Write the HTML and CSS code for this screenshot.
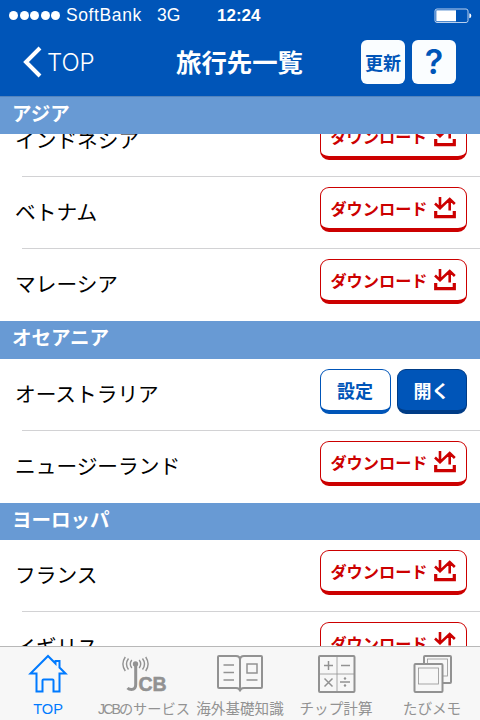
FILE: index.html
```html
<!DOCTYPE html>
<html lang="ja">
<head>
    <meta charset="utf-8">
    <title>旅行先一覧</title>
    <link rel="stylesheet" href="styles.css">
</head>
<body>
    <svg class="defs" width="0" height="0">
        <symbol id="download" viewBox="0 0 22 22">
            <path d="M1.700 14V19.700H20.300V14" fill="none" stroke="currentColor" stroke-width="3.200"/>
            <path d="M6 0V10M1 6.500L6 11.200L15.700 2L20.800 7M15.700 2.500V13.500" fill="none" stroke="currentColor" stroke-width="2.600"/>
            <path d="M2.500 8H9.500L6 12ZM12 6L15.700 1.500L19.500 6Z" fill="currentColor"/>
        </symbol>
    </svg>

    <header class="header">
        <div class="status">
            <div class="signal"><i></i><i></i><i></i><i></i><i></i></div>
            <span class="carrier">SoftBank</span>
            <span class="network">3G</span>
            <span class="time">12:24</span>
            <svg class="battery" width="38" height="16" viewBox="0 0 38 16">
                <rect x="1" y="1" width="33" height="13.5" rx="2" fill="none" stroke="#b9d0ee"/>
                <rect x="2.3" y="2.3" width="19.7" height="11" fill="#fff"/>
                <path d="M35.3 5.2Q37.3 5.5 37.3 7.8T35.3 10.3Z" fill="#fff"/>
            </svg>
        </div>
        <div class="navbar">
            <a class="back">
                <svg width="19" height="32" viewBox="0 0 19 32"><path d="M17 2L3 16L17 30" fill="none" stroke="#fff" stroke-width="4"/></svg>
                <span>TOP</span>
            </a>
            <h1>旅行先一覧</h1>
            <div class="nav-buttons">
                <button class="nav-button">更新</button>
                <button class="nav-button help">?</button>
            </div>
        </div>
    </header>

    <main class="list">
        <h2 class="section sticky">アジア</h2>
        <div class="row scrolled">
            <span class="name">インドネシア</span>
            <button class="btn download">ダウンロード<svg class="icon"><use href="#download"/></svg></button>
        </div>
        <div class="row">
            <span class="name">ベトナム</span>
            <button class="btn download">ダウンロード<svg class="icon"><use href="#download"/></svg></button>
        </div>
        <div class="row last">
            <span class="name">マレーシア</span>
            <button class="btn download">ダウンロード<svg class="icon"><use href="#download"/></svg></button>
        </div>

        <h2 class="section">オセアニア</h2>
        <div class="row">
            <span class="name">オーストラリア</span>
            <button class="btn setting">設定</button>
            <button class="btn open">開く</button>
        </div>
        <div class="row last">
            <span class="name">ニュージーランド</span>
            <button class="btn download">ダウンロード<svg class="icon"><use href="#download"/></svg></button>
        </div>

        <h2 class="section">ヨーロッパ</h2>
        <div class="row">
            <span class="name">フランス</span>
            <button class="btn download">ダウンロード<svg class="icon"><use href="#download"/></svg></button>
        </div>
        <div class="row">
            <span class="name">イギリス</span>
            <button class="btn download">ダウンロード<svg class="icon"><use href="#download"/></svg></button>
        </div>
    </main>

    <nav class="tabbar">
        <a class="tab active">
            <svg width="42" height="42" viewBox="0 0 42 42" fill="none" stroke="currentColor" stroke-width="2">
                <path d="M9.5 20.5H3.5L21 3L28.5 10.5V8H32.5V14.5L38.5 20.5H32.5V38.5H26.5V27.5Q26.5 26.5 25.5 26.5H16.5Q15.5 26.5 15.5 27.5V38.5H9.500Z"/>
            </svg>
            <span>TOP</span>
        </a>
        <a class="tab jcb">
            <svg width="48" height="42" viewBox="0 0 48 42" fill="none" stroke="currentColor">
                <circle cx="15.5" cy="11" r="2.7" fill="currentColor" stroke="none"/>
                <path d="M11.8 7Q8.800 11 11.8 15M8.500 5.500Q4.500 11 8.500 16.500M5.300 4Q.5 11 5.300 18M19.200 7Q22.200 11 19.200 15M22.500 5.500Q26.500 11 22.500 16.500M25.700 4Q30.500 11 25.700 18" stroke-width="1.4"/>
                <path d="M15.700 13V31.500Q15.700 36.500 11.500 36.500Q9 36.500 7.500 35" stroke-width="3"/>
                <text x="18.500" y="38" class="logo-text">CB</text>
            </svg>
            <span><span class="tight">JCB</span>のサービス</span>
        </a>
        <a class="tab info">
            <svg width="48" height="42" viewBox="0 0 48 42" fill="none" stroke="currentColor" stroke-width="2">
                <path d="M24 38.500V7Q24 3 20 3H3Q2 3 2 4V34Q2 35 3 35H20Q24 35 24 38.500ZM24 38.500V7Q24 3 28 3H45Q46 3 46 4V34Q46 35 45 35H28Q24 35 24 38.500Z"/>
                <path d="M7.500 12H18M7.500 19.500H18M7.500 27H18M30.500 27H41.500" stroke-width="1.400"/>
                <rect x="31" y="11" width="10" height="9" stroke-width="1.500"/>
            </svg>
            <span>海外基礎知識</span>
        </a>
        <a class="tab calc">
            <svg width="42" height="42" viewBox="0 0 42 42" fill="none" stroke="currentColor">
                <rect x="4" y="3" width="35.500" height="36" rx="1" stroke-width="2"/>
                <path d="M22 3V39M4 21H39" stroke-width=".8"/>
                <path d="M9 12.500H18M13.500 8V17M26 12.500H35M9.500 25.500L17.500 33.500M17.500 25.500L9.500 33.500M25 29H35" stroke-width="1.500"/>
                <circle cx="30" cy="25.500" r="1.200" fill="currentColor" stroke="none"/>
                <circle cx="30" cy="32.500" r="1.200" fill="currentColor" stroke="none"/>
            </svg>
            <span>チップ計算</span>
        </a>
        <a class="tab memo">
            <svg width="42" height="42" viewBox="0 0 42 42" stroke="currentColor" fill="#f7f7f7">
                <rect x="13" y="3" width="27" height="27" rx="1" stroke-width="2"/>
                <rect x="16.500" y="6" width="20" height="17" stroke-width=".8"/>
                <rect x="3.500" y="11" width="28" height="28" rx="1" stroke-width="2"/>
                <rect x="7.500" y="15" width="20" height="16" stroke-width=".8"/>
            </svg>
            <span>たびメモ</span>
        </a>
    </nav>
</body>
</html>
```
FILE: styles.css
```css
* {
    box-sizing: border-box;
}

body {
    margin: 0;
    width: 480px;
    height: 720px;
    display: flex;
    flex-direction: column;
    overflow: hidden;
    background-color: #fff;
    color: #000;
    font-family: "Liberation Sans", "Noto Sans CJK JP", sans-serif;
}

.defs {
    position: absolute;
}

button {
    margin: 0;
    padding: 0;
    font-family: "Noto Sans CJK JP", sans-serif;
}

/* header */
.header {
    height: 96px;
    flex: none;
    background-color: #0055b8;
    color: #fff;
}

.status {
    display: flex;
    align-items: center;
    height: 31px;
    padding-left: 9px;
    font-size: 17px;
    line-height: 31px;
}

.signal {
    display: flex;
    gap: 1.5px;
    width: 57px;
}

.signal i {
    width: 9px;
    height: 9px;
    border-radius: 50%;
    background-color: #fff;
}

.carrier {
    width: 91px;
    font-size: 17.5px;
    letter-spacing: 0.6px;
}

.network {
    width: 60px;
    font-size: 17.5px;
}

.time {
    width: 217px;
    font-weight: bold;
}

.navbar {
    display: flex;
    align-items: center;
    height: 62px;
    padding-left: 23px;
}

.back {
    display: flex;
    align-items: center;
    width: 153px;
    gap: 5px;
    font-family: Inter, sans-serif;
    font-weight: 300;
    font-size: 24px;
    letter-spacing: -0.1px;
}

.navbar h1 {
    margin: 0;
    padding-top: 2px;
    width: 185px;
    font-size: 25.4px;
    line-height: 36px;
    white-space: nowrap;
}

.nav-buttons {
    display: flex;
    gap: 7px;
}

.nav-button {
    width: 44px;
    height: 44px;
    border: 0;
    border-radius: 6px;
    background-color: #fafdff;
    color: #0055b8;
    font-size: 18px;
    font-weight: bold;
    line-height: 44px;
}

.help {
    font-family: Inter, sans-serif;
    font-size: 34px;
    font-weight: 600;
}

/* country list */
.list {
    flex: 1;
    min-height: 0;
    overflow: hidden;
}

.section {
    margin: 0;
    height: 37.5px;
    padding-left: 12px;
    background-color: #689ad4;
    color: #fff;
    font-size: 19.5px;
    line-height: 35px;
}

.sticky {
    position: relative;
    z-index: 1;
    border-top: 1px solid #5484bd;
    line-height: 34px;
}

.row {
    display: flex;
    align-items: center;
    gap: 6px;
    height: 72px;
    margin-left: 22px;
    padding-right: 13.5px;
    padding-bottom: 6px;
    border-bottom: 1px solid #d2d2d4;
}

.scrolled {
    margin-top: -28.5px;
}

.last {
    border-bottom-color: transparent;
}

.name {
    flex: 1;
    margin: 7px 0 0 -7px;
    font-size: 20.7px;
    line-height: 30px;
}

.btn {
    height: 45px;
    border: 1.5px solid #c00;
    border-bottom-width: 4px;
    border-radius: 9px;
    background-color: #fff;
    font-size: 18px;
    font-weight: bold;
}

.download {
    display: flex;
    align-items: center;
    justify-content: center;
    gap: 6px;
    width: 147px;
    color: #c00;
    font-size: 16.2px;
}

.icon {
    width: 22px;
    height: 22px;
}

.setting {
    width: 71px;
    border-color: #0055b8;
    color: #0055b8;
}

.open {
    width: 70px;
    border-color: #003c86;
    background-color: #0055b8;
    color: #fff;
}

/* bottom tabs */
.tabbar {
    display: grid;
    grid-template-columns: repeat(5, 96px);
    flex: none;
    height: 74px;
    border-top: 1px solid #b8b8b8;
    background-color: #f7f7f7;
}

.tab {
    display: flex;
    flex-direction: column;
    align-items: center;
    gap: 4px;
    padding-top: 6px;
    color: #929292;
    font-size: 14.6px;
    line-height: 20px;
    white-space: nowrap;
}

.tab svg {
    flex: none;
}

.jcb {
    font-size: 14.2px;
}

.tight {
    letter-spacing: -2px;
}

.active {
    color: #007aff;
}

.logo-text {
    fill: currentColor;
    stroke: currentColor;
    stroke-width: 0.5px;
    font-size: 19.5px;
    font-weight: bold;
}
```
